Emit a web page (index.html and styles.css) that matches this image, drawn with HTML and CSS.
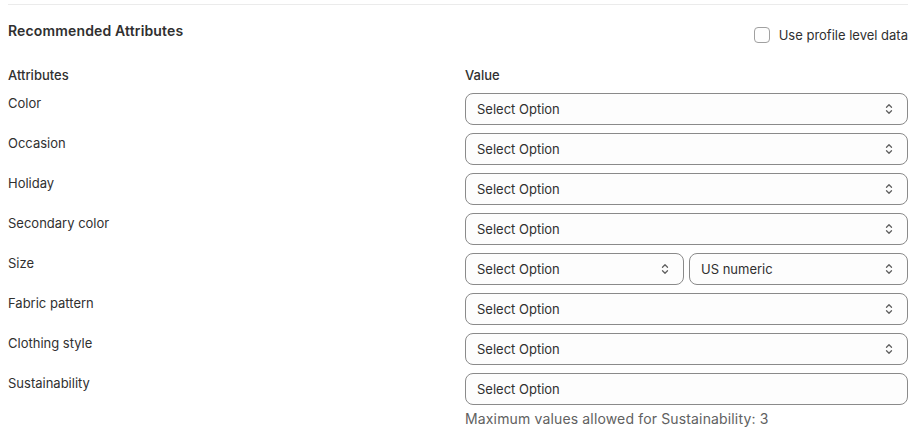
FILE: index.html
```html
<!DOCTYPE html>
<html>
<head>
<meta charset="utf-8">
<link rel="stylesheet" href="styles.css">
</head>
<body>
<div class="page">
  <section class="card">
    <div class="head">
      <h2 class="title">Recommended Attributes</h2>
      <label class="check">
        <span class="box"></span>
        <span>Use profile level data</span>
      </label>
    </div>
    <div class="grid">
      <div class="colhead">Attributes</div>
      <div class="colhead">Value</div>

      <div class="label">Color</div>
      <div class="select"><span>Select Option</span><svg class="chev" viewBox="0 0 20 20"><path d="M7.5 8.25 10 5.75l2.5 2.5M7.5 11.75 10 14.25l2.5-2.5"/></svg></div>

      <div class="label">Occasion</div>
      <div class="select"><span>Select Option</span><svg class="chev" viewBox="0 0 20 20"><path d="M7.5 8.25 10 5.75l2.5 2.5M7.5 11.75 10 14.25l2.5-2.5"/></svg></div>

      <div class="label">Holiday</div>
      <div class="select"><span>Select Option</span><svg class="chev" viewBox="0 0 20 20"><path d="M7.5 8.25 10 5.75l2.5 2.5M7.5 11.75 10 14.25l2.5-2.5"/></svg></div>

      <div class="label">Secondary color</div>
      <div class="select"><span>Select Option</span><svg class="chev" viewBox="0 0 20 20"><path d="M7.5 8.25 10 5.75l2.5 2.5M7.5 11.75 10 14.25l2.5-2.5"/></svg></div>

      <div class="label">Size</div>
      <div class="pair">
        <div class="select"><span>Select Option</span><svg class="chev" viewBox="0 0 20 20"><path d="M7.5 8.25 10 5.75l2.5 2.5M7.5 11.75 10 14.25l2.5-2.5"/></svg></div>
        <div class="select"><span>US numeric</span><svg class="chev" viewBox="0 0 20 20"><path d="M7.5 8.25 10 5.75l2.5 2.5M7.5 11.75 10 14.25l2.5-2.5"/></svg></div>
      </div>

      <div class="label">Fabric pattern</div>
      <div class="select"><span>Select Option</span><svg class="chev" viewBox="0 0 20 20"><path d="M7.5 8.25 10 5.75l2.5 2.5M7.5 11.75 10 14.25l2.5-2.5"/></svg></div>

      <div class="label">Clothing style</div>
      <div class="select"><span>Select Option</span><svg class="chev" viewBox="0 0 20 20"><path d="M7.5 8.25 10 5.75l2.5 2.5M7.5 11.75 10 14.25l2.5-2.5"/></svg></div>

      <div class="label">Sustainability</div>
      <div class="field">
        <div class="select"><span>Select Option</span></div>
        <div class="help">Maximum values allowed for Sustainability: 3</div>
      </div>
    </div>
  </section>
</div>
</body>
</html>
```

FILE: styles.css
```css
* { box-sizing: border-box; }
html, body { margin: 0; padding: 0; background: #ffffff; }
body {
  font-family: Inter, "Noto Sans", "Liberation Sans", sans-serif;
  font-size: 13px;
  line-height: 20px;
  color: #303030;
}
.page { padding: 4px 16px 0 8px; }
.card { border-top: 1px solid #ebebeb; padding-top: 16px; }
.head {
  display: flex;
  justify-content: space-between;
  align-items: flex-start;
}
.title {
  margin: 0;
  font-size: 14px;
  letter-spacing: 0.15px;
  line-height: 20px;
  font-weight: 600;
}
.check {
  display: flex;
  align-items: center;
  gap: 9px;
  margin-top: 4px;
  line-height: 20px;
}
.box {
  width: 16px;
  height: 16px;
  border: 1px solid #a0a0a0;
  border-radius: 4px;
  background: #fdfdfd;
}
.grid {
  display: grid;
  grid-template-columns: 443px 443px;
  column-gap: 14px;
  row-gap: 8px;
  margin-top: 20px;
}
.colhead { font-weight: 500; }
.label { line-height: 20px; }
.select {
  height: 32px;
  border: 1px solid #8a8a8a;
  border-radius: 8px;
  background: #fdfdfd;
  display: flex;
  align-items: center;
  justify-content: space-between;
  padding: 0 8px 0 11px;
}
.chev {
  width: 20px;
  height: 20px;
  fill: none;
  stroke: #616161;
  stroke-width: 1.3;
  stroke-linecap: round;
  stroke-linejoin: round;
}
.pair {
  display: grid;
  grid-template-columns: 1fr 1fr;
  gap: 5px;
}
.help {
  margin-top: 4px;
  font-size: 14px;
  letter-spacing: 0.15px;
  color: #616161;
}
```
